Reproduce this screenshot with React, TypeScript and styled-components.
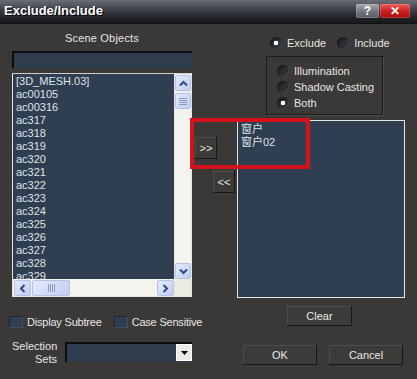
import React from "react";
import styled, { createGlobalStyle } from "styled-components";

const GlobalStyle = createGlobalStyle`
  html, body {
    margin: 0;
    padding: 0;
    background: #3a3937;
  }
  body {
    font-family: "Liberation Sans", "Noto Sans CJK SC", sans-serif;
    font-size: 11px;
    color: #e6e6e6;
  }
`;

const sceneObjects = [
  "[3D_MESH.03]",
  "ac00105",
  "ac00316",
  "ac317",
  "ac318",
  "ac319",
  "ac320",
  "ac321",
  "ac322",
  "ac323",
  "ac324",
  "ac325",
  "ac326",
  "ac327",
  "ac328",
  "ac329",
];

const excluded = ["窗户", "窗户02"];

const Window = styled.div`
  width: 417px;
  height: 379px;
  display: flex;
  flex-direction: column;
  background: #3a3937;
  overflow: hidden;
`;

const TitleBar = styled.div`
  height: 24px;
  flex: none;
  display: flex;
  align-items: center;
  padding: 0 7px 0 4px;
  background: linear-gradient(#6a6d77 0%, #3b3d45 45%, #202126 80%, #17181c 100%);
  border-bottom: 1px solid #111;
  box-sizing: border-box;
`;

const Title = styled.div`
  flex: 1;
  font-weight: bold;
  font-size: 13px;
  color: #fff;
  text-shadow: 1px 1px 0 #000;
  margin-top: -2px;
`;

const CaptionButton = styled.div<{ $close?: boolean }>`
  height: 14px;
  width: ${(p) => (p.$close ? "30px" : "23px")};
  margin-left: 1px;
  margin-top: -1px;
  display: flex;
  align-items: center;
  justify-content: center;
  font-weight: bold;
  font-size: 12px;
  color: #fff;
  border-radius: 2px;
  background: ${(p) =>
    p.$close
      ? "linear-gradient(#f05a5a, #c81c1c 55%, #a80e0e)"
      : "linear-gradient(#a4a9b2, #6e737c 55%, #585c64)"};
  box-shadow: inset 0 0 0 1px rgba(255, 255, 255, 0.18);
`;

const Body = styled.div`
  position: relative;
  flex: 1;
  display: flex;
  padding-left: 12px;
`;

const LeftColumn = styled.div`
  width: 180px;
  display: flex;
  flex-direction: column;
`;

const MiddleColumn = styled.div`
  width: 45px;
  display: flex;
  flex-direction: column;
`;

const RightColumn = styled.div`
  width: 168px;
  display: flex;
  flex-direction: column;
`;

const Caption = styled.div`
  margin-top: 8px;
  height: 13px;
  line-height: 13px;
  text-align: center;
  letter-spacing: 0.2px;
`;

const SearchBox = styled.div`
  margin-top: 6px;
  height: 17px;
  background: #2f3d4f;
  border-top: 2px solid #0d0d0d;
  border-left: 2px solid #0d0d0d;
  box-sizing: border-box;
`;

const ListFrame = styled.div<{ $h: number }>`
  height: ${(p) => p.$h}px;
  border: 1px solid #e4e4e4;
  border-top-color: #cfcfcf;
  box-sizing: border-box;
  background: #2f3e50;
  display: grid;
  grid-template-columns: 1fr 17px;
  grid-template-rows: 1fr 17px;
  overflow: hidden;
`;

const PlainList = styled.div<{ $h: number }>`
  height: ${(p) => p.$h}px;
  border: 1px solid #e4e4e4;
  box-sizing: border-box;
  background: #2f3e50;
  padding: 2px 0 0 3px;
  overflow: hidden;
`;

const Items = styled.div`
  padding: 1px 0 0 3px;
  overflow: hidden;
`;

const Item = styled.div`
  height: 13px;
  line-height: 13px;
  font-size: 11px;
  color: #dfe4ea;
  white-space: nowrap;
`;

const VTrack = styled.div`
  background: #f4f4ef;
  display: flex;
  flex-direction: column;
  padding-top: 1px;
  border-left: 1px solid #e9e9e2;
`;

const HTrack = styled.div`
  background: #f4f4ef;
  display: flex;
  padding-left: 1px;
  padding-top: 1px;
`;

const Corner = styled.div`
  background: #ecebe0;
`;

const ScrollButton = styled.div<{ $w?: number; $h?: number; $gap?: number }>`
  width: ${(p) => p.$w ?? 16}px;
  height: ${(p) => p.$h ?? 16}px;
  margin-top: ${(p) => p.$gap ?? 0}px;
  box-sizing: border-box;
  display: flex;
  align-items: center;
  justify-content: center;
  background: linear-gradient(135deg, #e4ebfc, #c2cdef);
  border: 1px solid #b4c0e4;
  border-radius: 2px;
  flex: none;
`;

const HThumb = styled(ScrollButton)`
  margin-top: 0;
  margin-left: 1px;
`;

const Spacer = styled.div`
  flex: 1;
`;

const Grip = () => (
  <svg width="8" height="8" viewBox="0 0 8 8">
    <path d="M0 1.5h8M0 3.5h8M0 5.5h8M0 7.5h8" stroke="#8e9bc4" strokeWidth="1" />
  </svg>
);

const VGrip = () => (
  <svg width="8" height="8" viewBox="0 0 8 8">
    <path d="M1.5 0v8M3.5 0v8M5.5 0v8M7.5 0v8" stroke="#8e9bc4" strokeWidth="1" />
  </svg>
);

const Chevron = ({ dir }: { dir: "up" | "down" | "left" | "right" }) => {
  const rot = { up: 0, right: 90, down: 180, left: 270 }[dir];
  return (
    <svg width="9" height="9" viewBox="0 0 9 9" style={{ transform: `rotate(${rot}deg)` }}>
      <path d="M1 6.5L4.5 3L8 6.5" fill="none" stroke="#2c4a88" strokeWidth="2" />
    </svg>
  );
};

const CheckRow = styled.div`
  margin-top: 18px;
  margin-left: -3px;
  height: 13px;
  display: flex;
  align-items: center;
  white-space: nowrap;
  width: 220px;
`;

const CheckBox = styled.div`
  width: 14px;
  height: 12px;
  box-sizing: border-box;
  background: #2f3e52;
  border-top: 1px solid #1e2734;
  border-left: 1px solid #1e2734;
  border-right: 1px solid #46505c;
  border-bottom: 1px solid #46505c;
  margin-right: 4px;
  flex: none;
`;

const CheckLabel = styled.span<{ $gap?: number }>`
  margin-right: ${(p) => p.$gap ?? 0}px;
  letter-spacing: -0.2px;
  flex: none;
`;

const SelectionRow = styled.div`
  margin-top: 12px;
  display: flex;
`;

const SelectionLabel = styled.div`
  width: 45px;
  text-align: right;
  line-height: 13px;
  margin-top: 0;
`;

const Dropdown = styled.div`
  margin-left: 8px;
  margin-top: 2px;
  width: 127px;
  height: 20px;
  box-sizing: border-box;
  background: #2f3d4f;
  border-top: 2px solid #0d0d0d;
  border-left: 2px solid #0d0d0d;
  display: flex;
  justify-content: flex-end;
`;

const DropArrow = styled.div`
  width: 16px;
  height: 17px;
  background: #ebebe3;
  border: 1px solid #fff;
  box-sizing: border-box;
  display: flex;
  align-items: center;
  justify-content: center;
`;

const Button = styled.div<{ $w: number; $h?: number; $ml?: number; $mt?: number }>`
  width: ${(p) => p.$w}px;
  height: ${(p) => p.$h ?? 20}px;
  margin-left: ${(p) => p.$ml ?? 0}px;
  margin-top: ${(p) => p.$mt ?? 0}px;
  box-sizing: border-box;
  display: flex;
  align-items: center;
  justify-content: center;
  background: #3c3b39;
  box-shadow: inset -1px -1px 0 #161616, inset 1px 1px 0 #4e4d4b;
  color: #e8e8e8;
  flex: none;
`;

const RadioRow = styled.div`
  margin-top: 12px;
  margin-left: 33px;
  display: flex;
  align-items: center;
  height: 13px;
`;

const RadioCircle = styled.div<{ $on?: boolean }>`
  width: 12px;
  height: 12px;
  border-radius: 50%;
  box-sizing: border-box;
  background: ${(p) =>
    p.$on
      ? "radial-gradient(circle, #ffffff 0 2px, #2c3036 2.6px)"
      : "#2a2e34"};
  box-shadow: inset 2px 2px 0 #1a1c20, inset -1px -1px 0 #3e434a;
  margin-right: 5px;
  flex: none;
`;

const RadioLabel = styled.span<{ $gap?: number }>`
  margin-right: ${(p) => p.$gap ?? 0}px;
`;

const GroupBox = styled.div`
  margin-top: 7px;
  margin-left: 29px;
  width: 117px;
  height: 59px;
  box-sizing: border-box;
  border: 1px solid #1c1c1b;
  box-shadow: 1px 1px 0 #4b4a48;
  padding: 7px 0 0 10px;
  display: flex;
  flex-direction: column;
  gap: 3px;
`;

const GroupOption = styled.div`
  display: flex;
  align-items: center;
  height: 13px;
`;

const ButtonRow = styled.div`
  display: flex;
  margin-top: 19px;
  margin-left: 6px;
  gap: 12px;
`;

const Annotation = styled.div`
  position: absolute;
  left: 190px;
  top: 94px;
  width: 120px;
  height: 51px;
  box-sizing: border-box;
  border: 4px solid #d3121b;
  pointer-events: none;
`;

export default function App() {
  return (
    <>
      <GlobalStyle />
      <Window>
        <TitleBar>
          <Title>Exclude/Include</Title>
          <CaptionButton>?</CaptionButton>
          <CaptionButton $close>✕</CaptionButton>
        </TitleBar>
        <Body>
          <LeftColumn>
            <Caption>Scene Objects</Caption>
            <SearchBox />
            <div style={{ marginTop: 5 }}>
              <ListFrame $h={224}>
                <Items>
                  {sceneObjects.map((name) => (
                    <Item key={name}>{name}</Item>
                  ))}
                </Items>
                <VTrack>
                  <ScrollButton>
                    <Chevron dir="up" />
                  </ScrollButton>
                  <ScrollButton $gap={2}>
                    <Grip />
                  </ScrollButton>
                  <Spacer />
                  <ScrollButton>
                    <Chevron dir="down" />
                  </ScrollButton>
                </VTrack>
                <HTrack>
                  <ScrollButton $w={17}>
                    <Chevron dir="left" />
                  </ScrollButton>
                  <HThumb $w={38}>
                    <VGrip />
                  </HThumb>
                  <Spacer />
                  <ScrollButton $w={17}>
                    <Chevron dir="right" />
                  </ScrollButton>
                </HTrack>
                <Corner />
              </ListFrame>
            </div>
            <CheckRow>
              <CheckBox />
              <CheckLabel $gap={12}>Display Subtree</CheckLabel>
              <CheckBox />
              <CheckLabel>Case Sensitive</CheckLabel>
            </CheckRow>
            <SelectionRow>
              <SelectionLabel>
                Selection
                <br />
                Sets
              </SelectionLabel>
              <Dropdown>
                <DropArrow>
                  <svg width="7" height="4" viewBox="0 0 7 4">
                    <path d="M0 0h7L3.5 4z" fill="#000" />
                  </svg>
                </DropArrow>
              </Dropdown>
            </SelectionRow>
          </LeftColumn>
          <MiddleColumn>
            <Button $w={22} $h={22} $ml={3} $mt={113}>
              &gt;&gt;
            </Button>
            <Button $w={22} $h={22} $ml={21} $mt={12}>
              &lt;&lt;
            </Button>
          </MiddleColumn>
          <RightColumn>
            <RadioRow>
              <RadioCircle $on />
              <RadioLabel $gap={11}>Exclude</RadioLabel>
              <RadioCircle />
              <RadioLabel>Include</RadioLabel>
            </RadioRow>
            <GroupBox>
              <GroupOption>
                <RadioCircle />
                Illumination
              </GroupOption>
              <GroupOption>
                <RadioCircle />
                Shadow Casting
              </GroupOption>
              <GroupOption>
                <RadioCircle $on />
                Both
              </GroupOption>
            </GroupBox>
            <div style={{ marginTop: 5 }}>
              <PlainList $h={178}>
                {excluded.map((name) => (
                  <Item key={name}>{name}</Item>
                ))}
              </PlainList>
            </div>
            <Button $w={65} $ml={50} $mt={8}>
              Clear
            </Button>
            <ButtonRow>
              <Button $w={74}>OK</Button>
              <Button $w={74}>Cancel</Button>
            </ButtonRow>
          </RightColumn>
          <Annotation />
        </Body>
      </Window>
    </>
  );
}
